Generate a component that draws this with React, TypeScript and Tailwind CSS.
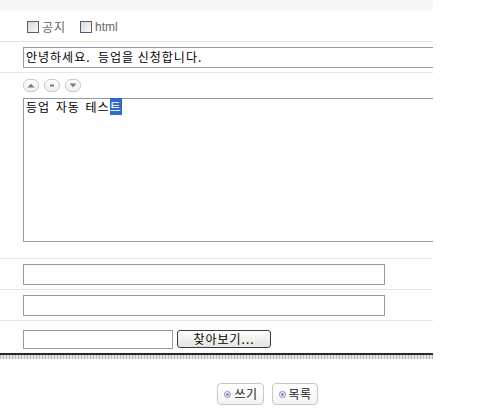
const KR = "font-['Noto_Sans_CJK_KR','Noto_Sans',sans-serif]";

function Check({ label, latin }: { label: string; latin?: boolean }) {
  return (
    <label className="flex items-center gap-[3px]">
      <span className="w-[12px] h-[12px] border border-[#52606d] bg-gradient-to-br from-[#d4d8dc] to-[#fbfbfb]" />
      <span
        className={
          latin
            ? "text-[12px] leading-[12px] text-[#666] font-['Liberation_Sans',Arial,sans-serif]"
            : `text-[12px] leading-[12px] text-[#666] tracking-[1px] ${KR}`
        }
      >
        {label}
      </span>
    </label>
  );
}

function Arrow({ kind }: { kind: "up" | "mid" | "down" }) {
  return (
    <span className="w-[16px] h-[13px] rounded-[6px] border border-[#c9c9c9] bg-gradient-to-b from-white to-[#eeeeee] flex items-center justify-center">
      <svg width="8" height="5" viewBox="0 0 8 5">
        {kind === "up" && <path d="M0.5 4.5 L4 0.8 L7.5 4.5 Z" fill="#7a7a7a" />}
        {kind === "mid" && <rect x="2" y="1.5" width="4" height="2" fill="#7a7a7a" />}
        {kind === "down" && <path d="M0.5 0.5 L4 4.2 L7.5 0.5 Z" fill="#7a7a7a" />}
      </svg>
    </span>
  );
}

function Field({ w }: { w: string }) {
  return <div className={`${w} h-[21px] border border-[#8d9ba6] bg-[#fdfdfc]`} />;
}

function BoardButton({ label }: { label: string }) {
  return (
    <button className={`h-[22px] pl-[6px] pr-[5px] rounded-[4px] border border-[#c6c6c6] bg-gradient-to-b from-white to-[#f4f4f4] flex items-center gap-[3px] text-[12px] leading-[12px] text-[#222] tracking-[0.5px] ${KR}`}>
      <span className="w-[7px] h-[7px] rounded-full border border-[#8c7fc4] flex items-center justify-center">
        <span className="w-[3px] h-[3px] rounded-full bg-[#8c7fc4]" />
      </span>
      {label}
    </button>
  );
}

export default function App() {
  return (
    <div className="w-[503px] h-[415px] bg-white overflow-hidden">
      <div className="w-[433px] overflow-hidden">
        <div className="h-[11px] bg-[#f7f7f7]" />

        <div className="h-[31px] border-b border-[#e6e4df] pl-[27px] flex items-center gap-[14px] pt-[1px]">
          <Check label="공지" />
          <Check label="html" latin />
        </div>

        <div className="h-[31px] border-b border-[#e6e6e6] pl-[23px] flex items-center">
          <div className={`w-[420px] shrink-0 h-[21px] border border-[#8d9ba6] pl-[2px] flex items-center text-[12px] leading-[12px] text-black tracking-[1px] ${KR}`}>
            안녕하세요.&nbsp; 등업을 신청합니다.
          </div>
        </div>

        <div className="h-[186px] border-b border-[#e6e6e6] pl-[23px] pt-[6px]">
          <div className="flex gap-[5px]">
            <Arrow kind="up" />
            <Arrow kind="mid" />
            <Arrow kind="down" />
          </div>
          <div className={`mt-[6px] w-[420px] h-[144px] border border-[#8d9ba6] pl-[2px] pt-[1px] text-[12px] leading-[13px] text-black tracking-[1px] [word-spacing:2px] ${KR}`}>
            등업 자동 테스<span className="bg-[#316ac5] text-white">트</span>
          </div>
        </div>

        <div className="h-[31px] border-b border-[#e6e6e6] pl-[23px] flex items-center">
          <Field w="w-[362px]" />
        </div>

        <div className="h-[31px] border-b border-[#e6e6e6] pl-[23px] flex items-center">
          <Field w="w-[362px]" />
        </div>

        <div className="h-[32px] pl-[23px] flex items-center gap-[4px] pt-[4px]">
          <div className="w-[150px] h-[19px] border border-[#8d9ba6] bg-white" />
          <button className={`w-[94px] h-[18px] rounded-[3px] border border-[#2c3e50] bg-gradient-to-b from-white to-[#e6e3da] text-[12px] leading-[12px] text-black tracking-[1px] ${KR}`}>
            찾아보기...
          </button>
        </div>

        <div className="h-[2px] bg-[#2a2a2a]" />
        <div className="h-[4px] bg-[repeating-linear-gradient(90deg,#b5b5b5_0px,#b5b5b5_1px,#e4e4e4_1px,#e4e4e4_3px)]" />
      </div>

      <div className="w-[433px] flex justify-center gap-[8px] pt-[24px] pl-[102px]">
        <BoardButton label="쓰기" />
        <BoardButton label="목록" />
      </div>
    </div>
  );
}
